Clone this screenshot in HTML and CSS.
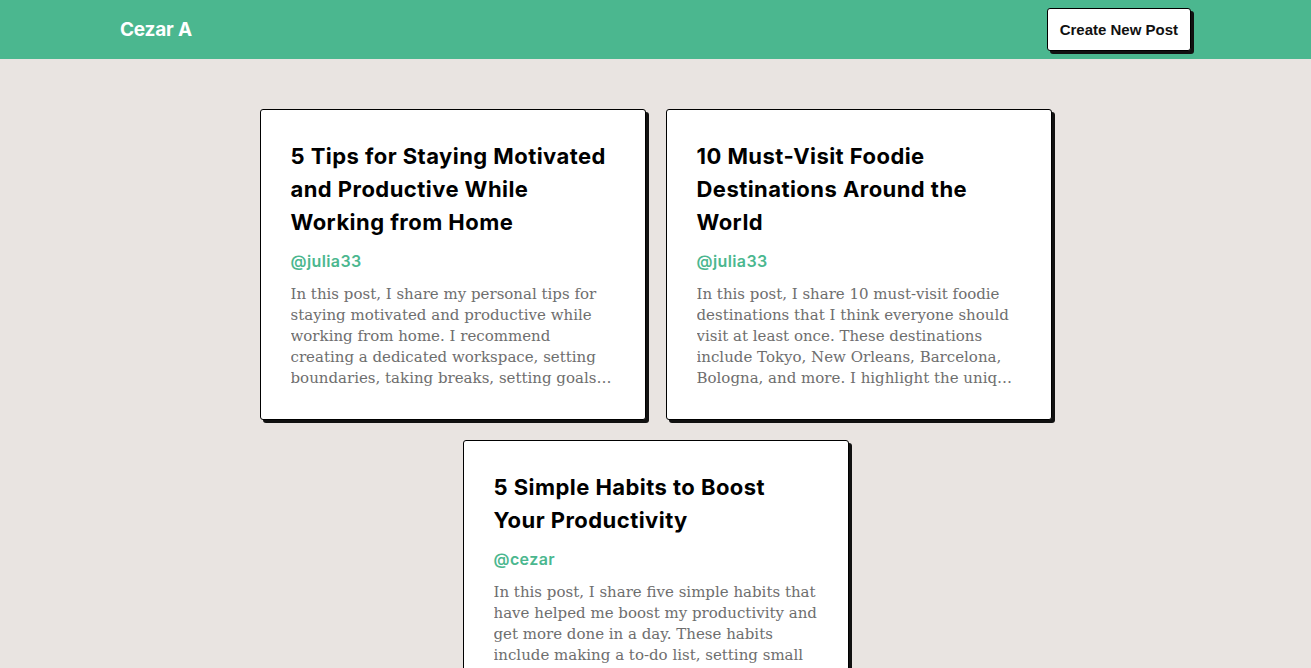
FILE: index.html
```html
<!DOCTYPE html>
<html lang="en">
<head>
<meta charset="utf-8">
<title>Cezar A</title>
<link rel="stylesheet" href="styles.css">
</head>
<body>
<header class="topbar">
  <div class="topbar-inner">
    <div class="brand">Cezar A</div>
    <button class="btn">Create New Post</button>
  </div>
</header>
<main class="posts">
  <article class="card">
    <h2 class="card-title">5 Tips for Staying Motivated and Productive While Working from Home</h2>
    <div class="card-author">@julia33</div>
    <p class="card-body">In this post, I share my personal tips for staying motivated and productive while working from home. I recommend creating a dedicated workspace, setting boundaries, taking breaks, setting goals, and staying connected with colleagues.</p>
  </article>
  <article class="card">
    <h2 class="card-title">10 Must-Visit Foodie Destinations Around the World</h2>
    <div class="card-author">@julia33</div>
    <p class="card-body">In this post, I share 10 must-visit foodie destinations that I think everyone should visit at least once. These destinations include Tokyo, New Orleans, Barcelona, Bologna, and more. I highlight the unique dishes and food culture of each place.</p>
  </article>
  <article class="card">
    <h2 class="card-title">5 Simple Habits to Boost Your Productivity</h2>
    <div class="card-author">@cezar</div>
    <p class="card-body">In this post, I share five simple habits that have helped me boost my productivity and get more done in a day. These habits include making a to-do list, setting small goals, and taking regular breaks throughout the day.</p>
  </article>
</main>
</body>
</html>
```
FILE: styles.css
```css
* { box-sizing: border-box; }
body {
  margin: 0;
  background: #e9e4e1;
  font-family: "Inter", "Open Sans", sans-serif;
}
.topbar {
  background: #4bb78f;
  height: 59px;
}
.topbar-inner {
  height: 100%;
  padding: 0 120px;
  display: flex;
  align-items: center;
  justify-content: space-between;
}
.brand {
  color: #fff;
  font-family: "Inter", sans-serif;
  font-weight: 700;
  font-size: 19px;
  letter-spacing: -0.2px;
}
.btn {
  font-family: "Liberation Sans", Arial, sans-serif;
  font-weight: 700;
  font-size: 15px;
  color: #111;
  background: #fff;
  border: 1px solid #000;
  border-radius: 3px;
  box-shadow: 3px 3px 0 #111;
  height: 43px;
  padding: 0 12px;
}
.posts {
  display: flex;
  flex-wrap: wrap;
  justify-content: center;
  gap: 20px;
  width: 792px;
  margin: 50px auto 0;
}
.card {
  width: 386px;
  background: #fff;
  border: 1px solid #000;
  border-radius: 3px;
  box-shadow: 3px 3px 0 #111;
  padding: 30px;
}
.card-title {
  margin: 0 0 10px;
  font-family: "Inter", sans-serif;
  font-weight: 700;
  font-size: 22px;
  line-height: 33px;
  letter-spacing: 0.45px;
  color: #000;
}
.card-author {
  color: #4bb78f;
  font-family: "Inter", sans-serif;
  font-weight: 600;
  font-size: 16px;
  line-height: 24px;
  letter-spacing: 0.4px;
  margin-bottom: 11px;
}
.card-body {
  margin: 0;
  font-family: "DejaVu Serif", serif;
  font-size: 15px;
  line-height: 21px;
  color: #6e6e6e;
  display: -webkit-box;
  -webkit-line-clamp: 5;
  -webkit-box-orient: vertical;
  overflow: hidden;
}
```
